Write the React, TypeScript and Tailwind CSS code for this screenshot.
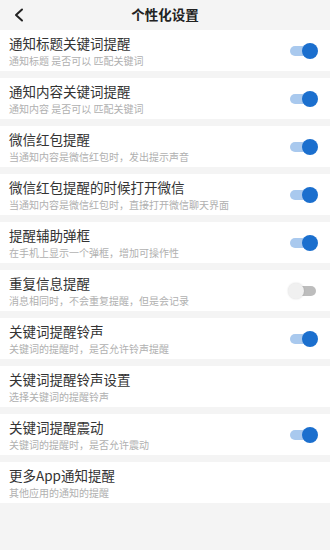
import React from "react";

const items: { title: string; sub: string; toggle: "on" | "off" | "none" }[] = [
  { title: "通知标题关键词提醒", sub: "通知标题 是否可以 匹配关键词", toggle: "on" },
  { title: "通知内容关键词提醒", sub: "通知内容 是否可以 匹配关键词", toggle: "on" },
  { title: "微信红包提醒", sub: "当通知内容是微信红包时，发出提示声音", toggle: "on" },
  { title: "微信红包提醒的时候打开微信", sub: "当通知内容是微信红包时，直接打开微信聊天界面", toggle: "on" },
  { title: "提醒辅助弹框", sub: "在手机上显示一个弹框，增加可操作性", toggle: "on" },
  { title: "重复信息提醒", sub: "消息相同时，不会重复提醒，但是会记录", toggle: "off" },
  { title: "关键词提醒铃声", sub: "关键词的提醒时，是否允许铃声提醒", toggle: "on" },
  { title: "关键词提醒铃声设置", sub: "选择关键词的提醒铃声", toggle: "none" },
  { title: "关键词提醒震动", sub: "关键词的提醒时，是否允许震动", toggle: "on" },
  { title: "更多App通知提醒", sub: "其他应用的通知的提醒", toggle: "none" },
];

function Toggle({ on }: { on: boolean }) {
  return on ? (
    <div className="relative w-[30px] h-[16px] flex items-center">
      <div className="w-[26px] h-[10px] rounded-full bg-[#a9c9ee] ml-[2px]" />
      <div className="absolute right-0 top-0 w-[16px] h-[16px] rounded-full bg-[#1b6fce]" />
    </div>
  ) : (
    <div className="relative w-[30px] h-[16px] flex items-center">
      <div className="w-[26px] h-[10px] rounded-full bg-[#bdbdbd] ml-[2px]" />
      <div className="absolute left-0 top-0 w-[16px] h-[16px] rounded-full bg-[#f0f0f0] shadow-[0_0_2px_rgba(0,0,0,0.15)]" />
    </div>
  );
}

export default function App() {
  return (
    <div
      className="w-[330px] h-[550px] bg-[#f4f4f4] flex flex-col overflow-hidden"
      style={{ fontFamily: '"Noto Sans CJK SC", "Noto Sans", sans-serif' }}
    >
      <div className="h-[30px] shrink-0 relative flex items-center justify-center">
        <svg className="absolute left-[13px] top-[8px]" width="12" height="14" viewBox="0 0 12 14">
          <path d="M9 1.5 L3 7 L9 12.5" fill="none" stroke="#222" strokeWidth="2" strokeLinecap="round" strokeLinejoin="round" />
        </svg>
        <span className="text-[13.5px] font-bold text-[#222] leading-none">个性化设置</span>
      </div>
      <div className="flex flex-col gap-[7px]">
        {items.map((it) => (
          <div key={it.title} className="h-[41px] bg-white flex items-center pl-[9px] pr-[12px]">
            <div className="flex-1 flex flex-col pt-[1px]">
              <div className="text-[13.5px] leading-[17px] text-[#333]">{it.title}</div>
              <div className="text-[10px] leading-[14px] text-[#b0b0b0] mt-[2px]">{it.sub}</div>
            </div>
            {it.toggle !== "none" && <Toggle on={it.toggle === "on"} />}
          </div>
        ))}
      </div>
    </div>
  );
}
